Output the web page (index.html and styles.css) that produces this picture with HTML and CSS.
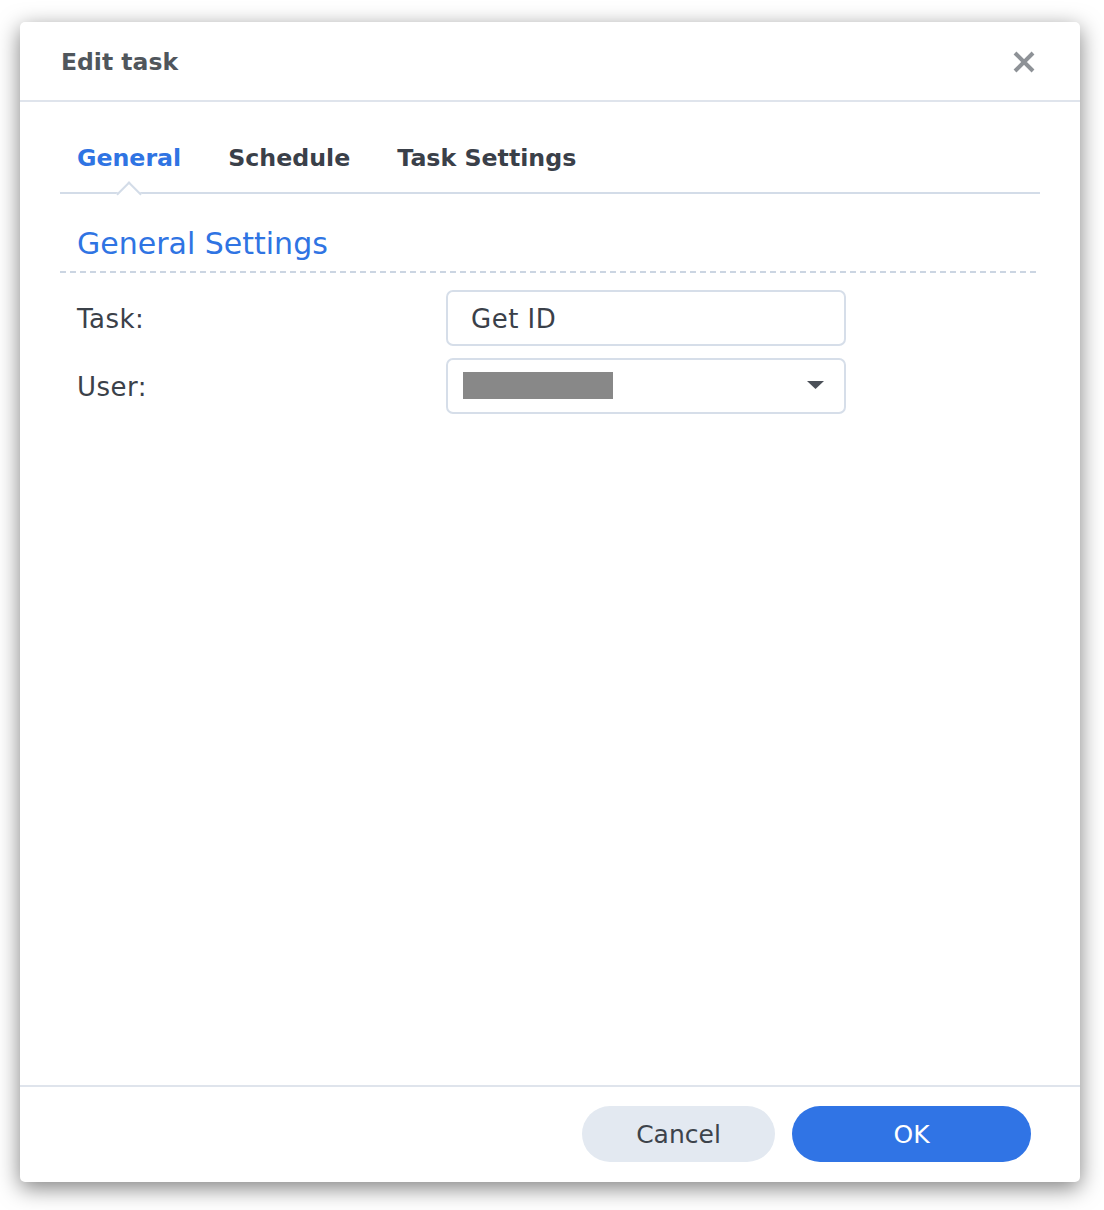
FILE: index.html
```html
<!DOCTYPE html>
<html>
<head>
<meta charset="utf-8">
<link rel="stylesheet" href="styles.css">
</head>
<body>
<div class="dialog">
  <div class="header">
    <div class="title">Edit task</div>
    <svg class="close" width="22" height="22" viewBox="0 0 22 22"><path d="M2 2 L20 20 M20 2 L2 20" stroke="#8e9297" stroke-width="4" stroke-linecap="butt"/></svg>
  </div>
  <div class="content">
    <div class="tabs">
      <div class="tab active">General</div>
      <div class="tab">Schedule</div>
      <div class="tab">Task Settings</div>
    </div>
    <div class="section-title">General Settings</div>
    <div class="dash"></div>
    <div class="form">
      <div class="row">
        <div class="label">Task:</div>
        <div class="field">Get ID</div>
      </div>
      <div class="row">
        <div class="label">User:</div>
        <div class="field select">
          <span class="redact"></span>
          <svg class="caret" width="17" height="8" viewBox="0 0 17 8"><path d="M0 0 H17 L8.5 8 Z" fill="#4b5058"/></svg>
        </div>
      </div>
    </div>
  </div>
  <div class="footer">
    <button class="btn cancel">Cancel</button>
    <button class="btn ok">OK</button>
  </div>
</div>
</body>
</html>
```
FILE: styles.css
```css
html, body {
  margin: 0;
  padding: 0;
  background: #ffffff;
}
body {
  font-family: "DejaVu Sans", Verdana, sans-serif;
  padding: 22px 24px 28px 20px;
}
.dialog {
  width: 1060px;
  height: 1160px;
  background: #fff;
  border-radius: 5px;
  box-shadow: 0 6px 22px rgba(0, 0, 0, 0.5);
  display: flex;
  flex-direction: column;
}
.header {
  height: 78px;
  border-bottom: 2px solid #dfe4ec;
  display: flex;
  align-items: center;
  justify-content: space-between;
  padding: 0 45px 0 41px;
  box-sizing: content-box;
}
.title {
  font-weight: bold;
  font-size: 23.5px;
  color: #50565c;
  padding-top: 2px;
}
.close {
  display: block;
  margin-top: 1px;
}
.content {
  flex: 1;
  padding: 0 40px;
}
.tabs {
  display: flex;
  gap: 47px;
  padding: 40px 0 18px 17px;
  border-bottom: 2px solid #d3dce8;
}
.tab {
  position: relative;
  font-weight: bold;
  font-size: 23.7px;
  line-height: 32px;
  color: #3a4049;
}
.tab.active {
  color: #2f74e3;
}
.tab.active::after {
  content: "";
  position: absolute;
  left: 50%;
  margin-left: -9px;
  bottom: -29px;
  width: 18px;
  height: 18px;
  background: #fff;
  border-top: 2px solid #d3dce8;
  border-left: 2px solid #d3dce8;
  box-sizing: border-box;
  transform: rotate(45deg);
}
.section-title {
  font-size: 30px;
  line-height: 36px;
  color: #2f74e3;
  padding: 32px 0 0 17px;
}
.dash {
  height: 2px;
  margin-top: 9px;
  background: repeating-linear-gradient(to right, #cbd5e2 0 6px, transparent 6px 10px);
}
.form {
  padding-top: 17px;
  display: flex;
  flex-direction: column;
  gap: 12px;
}
.row {
  display: flex;
  align-items: center;
}
.label {
  width: 369px;
  padding-left: 17px;
  font-size: 26px;
  letter-spacing: 0.5px;
  color: #3b4149;
  padding-top: 1px;
}
.field {
  width: 400px;
  height: 56px;
  box-sizing: border-box;
  border: 2px solid #d6dee9;
  border-radius: 7px;
  padding: 2px 0 0 23px;
  font-size: 26px;
  letter-spacing: 0.5px;
  color: #3a4049;
  display: flex;
  align-items: center;
}
.field.select {
  padding: 0 20px 0 15px;
  justify-content: space-between;
}
.redact {
  display: block;
  width: 150px;
  height: 27px;
  background: #888888;
  margin-top: -1px;
}
.caret {
  display: block;
  margin-top: -3px;
}
.footer {
  border-top: 2px solid #dfe4ec;
  padding: 19px 49px 20px 0;
  display: flex;
  justify-content: flex-end;
  gap: 17px;
}
.btn {
  height: 56px;
  border: none;
  border-radius: 28px;
  font-family: "DejaVu Sans", Verdana, sans-serif;
  font-size: 25px;
  padding: 0;
}
.cancel {
  width: 193px;
  background: #e3e9f1;
  color: #3d434b;
}
.ok {
  width: 239px;
  background: #3074e5;
  color: #ffffff;
}
```
